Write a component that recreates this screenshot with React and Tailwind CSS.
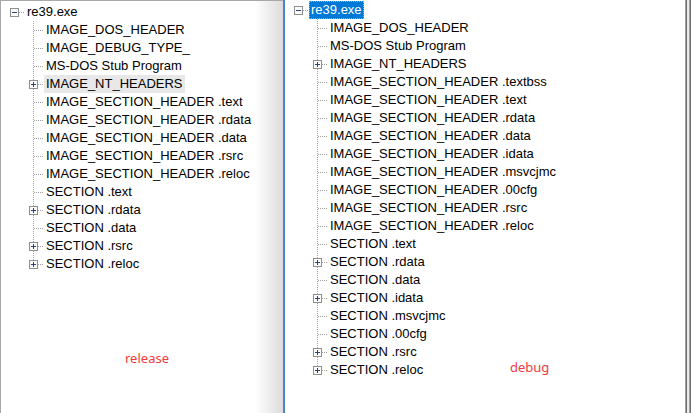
import React from 'react';

const leftItems = [
    ['IMAGE_DOS_HEADER'],
    ['IMAGE_DEBUG_TYPE_'],
    ['MS-DOS Stub Program'],
    ['IMAGE_NT_HEADERS', true, 'hover'],
    ['IMAGE_SECTION_HEADER .text'],
    ['IMAGE_SECTION_HEADER .rdata'],
    ['IMAGE_SECTION_HEADER .data'],
    ['IMAGE_SECTION_HEADER .rsrc'],
    ['IMAGE_SECTION_HEADER .reloc'],
    ['SECTION .text'],
    ['SECTION .rdata', true],
    ['SECTION .data'],
    ['SECTION .rsrc', true],
    ['SECTION .reloc', true],
];

const rightItems = [
    ['IMAGE_DOS_HEADER'],
    ['MS-DOS Stub Program'],
    ['IMAGE_NT_HEADERS', true],
    ['IMAGE_SECTION_HEADER .textbss'],
    ['IMAGE_SECTION_HEADER .text'],
    ['IMAGE_SECTION_HEADER .rdata'],
    ['IMAGE_SECTION_HEADER .data'],
    ['IMAGE_SECTION_HEADER .idata'],
    ['IMAGE_SECTION_HEADER .msvcjmc'],
    ['IMAGE_SECTION_HEADER .00cfg'],
    ['IMAGE_SECTION_HEADER .rsrc'],
    ['IMAGE_SECTION_HEADER .reloc'],
    ['SECTION .text'],
    ['SECTION .rdata', true],
    ['SECTION .data'],
    ['SECTION .idata', true],
    ['SECTION .msvcjmc'],
    ['SECTION .00cfg'],
    ['SECTION .rsrc', true],
    ['SECTION .reloc', true],
];

// tree lines + expand box, one row tall
function Gutter({ kind, box, expanded }) {
    const dot = { stroke: '#a0a0a0', strokeDasharray: '1 1' };
    return (
        <svg width="20" height="18" className="block shrink-0">
            {kind === 'mid' && <line x1="9.5" y1="0" x2="9.5" y2="18" {...dot} />}
            {kind === 'last' && <line x1="9.5" y1="0" x2="9.5" y2="9" {...dot} />}
            <line x1={box ? 14 : 10} y1="9.5" x2="20" y2="9.5" {...dot} />
            {box && (
                <>
                    <rect x="5.5" y="5.5" width="8" height="8" fill="#fbfbfb" stroke="#8f8f8f" />
                    <line x1="7" y1="9.5" x2="12" y2="9.5" stroke="#2d4279" />
                    {!expanded && <line x1="9.5" y1="7" x2="9.5" y2="12" stroke="#2d4279" />}
                </>
            )}
        </svg>
    );
}

function Label({ text, state }) {
    let cls = 'h-[18px] px-[2px] leading-[18px] whitespace-nowrap text-black';
    if (state === 'hover') cls = 'h-[18px] px-[2px] leading-[18px] whitespace-nowrap text-black bg-[#e8e8e8]';
    if (state === 'selected')
        cls = 'h-[18px] px-[2px] leading-[18px] whitespace-nowrap text-white bg-[#0078d7] outline-1 outline-dotted outline-[#f4a040] -outline-offset-1';
    return <span className={cls}>{text}</span>;
}

function Tree({ items, rootState }) {
    return (
        <div className="font-['Liberation_Sans',Arial,sans-serif] text-[13px]">
            <div className="flex h-[18px] pl-[4px]">
                <Gutter kind="root" box expanded />
                <Label text="re39.exe" state={rootState} />
            </div>
            {items.map(([text, box, state], i) => (
                <div key={i} className="flex h-[18px] pl-[23px]">
                    <Gutter kind={i === items.length - 1 ? 'last' : 'mid'} box={box} />
                    <Label text={text} state={state} />
                </div>
            ))}
        </div>
    );
}

export default function App() {
    return (
        <div className="flex h-[413px] w-[693px] overflow-hidden bg-white">
            <div className="flex w-[283px] shrink-0 flex-col border-t border-l border-[#a8a8a8] bg-[linear-gradient(to_right,#ffffff_254px,#dcdcdc_282px)] pt-[2px]">
                <Tree items={leftItems} />
                <div className="mt-[76px] pl-[124px] font-['Noto_Sans',sans-serif] text-[13px] leading-[18px] text-[#f23a3a]">
                    release
                </div>
            </div>
            <div className="w-[2px] shrink-0 bg-[#4a86c5]" />
            <div className="relative w-[400px] shrink-0 pt-[1px]">
                <Tree items={rightItems} rootState="selected" />
                <span className="absolute left-[225px] top-[358px] font-['Noto_Sans',sans-serif] text-[13px] leading-[18px] text-[#f23a3a]">
                    debug
                </span>
            </div>
            <div className="flex shrink-0">
                <div className="w-px bg-[#a0a0a0]" />
                <div className="w-px bg-[#6d6d6d]" />
                <div className="w-[2px] bg-[#ececec]" />
                <div className="w-px bg-[#a0a0a0]" />
                <div className="w-px bg-[#6d6d6d]" />
            </div>
        </div>
    );
}
